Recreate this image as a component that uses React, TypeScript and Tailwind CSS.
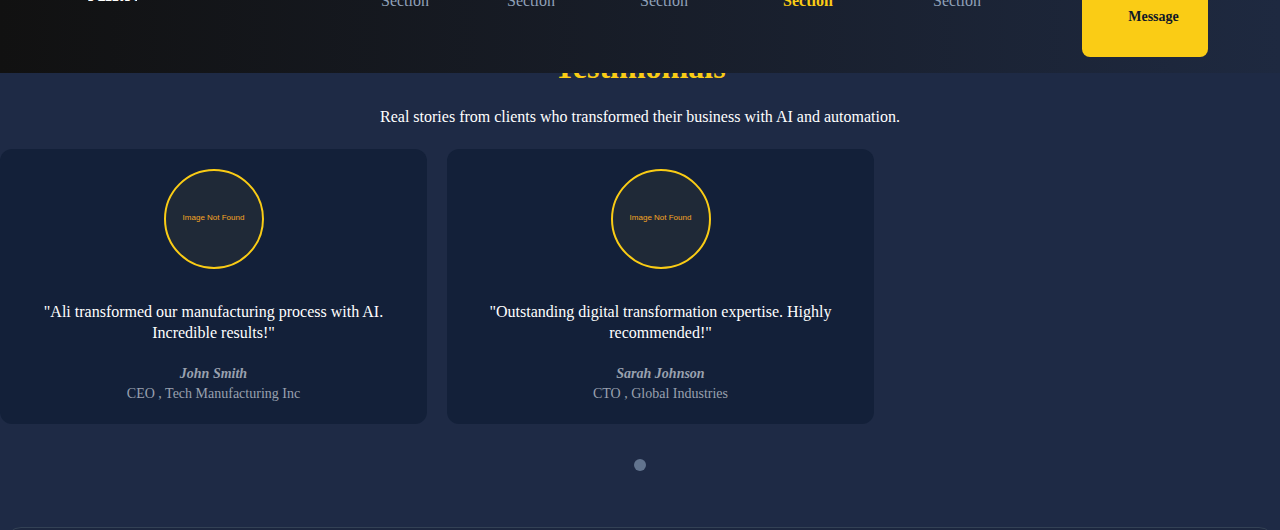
import React from 'react';

const navItems = [
    { top: 'Home', label: 'Section', ml: 'ml-[244px]', active: false },
    { top: 'About', label: 'Section', ml: 'ml-[78px]', active: false },
    { top: 'Services', label: 'Section', ml: 'ml-[85px]', active: false },
    { top: 'Testimonials', label: 'Section', ml: 'ml-[96px]', active: true },
    { top: 'Contact', label: 'Section', ml: 'ml-[101px]', active: false },
];

const testimonials = [
    {
        quote: '"Ali transformed our manufacturing process with AI. Incredible results!"',
        name: 'John Smith',
        role: 'CEO , Tech Manufacturing Inc',
    },
    {
        quote: '"Outstanding digital transformation expertise. Highly recommended!"',
        name: 'Sarah Johnson',
        role: 'CTO , Global Industries',
    },
];

function Header() {
    return (
        <header className="fixed top-0 left-0 right-0 z-20 h-[73px] overflow-hidden bg-[linear-gradient(to_right,#111111,#1e2940)]">
            <div className="flex items-start pl-[88px]">
                <div className="-mt-[23px] text-2xl leading-8 font-bold text-white w-[49px] whitespace-nowrap overflow-hidden">
                    Ali.AI
                </div>
                {navItems.map((item) => (
                    <div
                        key={item.top}
                        className={`${item.ml} -mt-[35px] w-[48px] flex flex-col items-center text-base leading-6 whitespace-nowrap ${
                            item.active ? 'text-[#facc15] font-bold' : 'text-slate-400'
                        }`}
                    >
                        <span>{item.top}</span>
                        <span>{item.label}</span>
                    </div>
                ))}
                <button className="ml-[101px] -mt-[35px] w-[126px] pl-[40px] pr-[23px] pt-4 pb-[28px] rounded-lg bg-[#facc15] text-sm leading-6 font-bold text-gray-900 text-center">
                    Send Message
                </button>
            </div>
        </header>
    );
}

function Card({ quote, name, role }: { quote: string; name: string; role: string }) {
    return (
        <div className="w-[427px] shrink-0 rounded-xl bg-[#132039] px-8 pt-5 pb-5 flex flex-col items-center text-center">
            <div className="w-[100px] h-[100px] rounded-full border-2 border-[#facc15] bg-[#1f2937] flex items-center justify-center pb-[3px]">
                <span className="font-['Liberation_Sans',sans-serif] text-[8px] text-[#f5a524]">Image Not Found</span>
            </div>
            <p className="mt-[32px] text-base leading-[21px] text-white">{quote}</p>
            <p className="mt-[21px] text-sm leading-5 font-bold italic text-gray-400">{name}</p>
            <p className="text-sm leading-5 text-gray-400">{role}</p>
        </div>
    );
}

export default function App() {
    return (
        <div className="min-h-screen bg-[#1e2a45] font-['Liberation_Serif',serif] overflow-hidden">
            <Header />
            <section className="pt-[49px] flex flex-col items-center">
                <h2 className="text-[32px] leading-9 font-bold text-[#facc15]">Testimonials</h2>
                <p className="mt-5 text-base leading-6 text-white">
                    Real stories from clients who transformed their business with AI and automation.
                </p>
                <div className="mt-5 w-full flex gap-5">
                    {testimonials.map((t) => (
                        <Card key={t.name} {...t} />
                    ))}
                </div>
                <div className="mt-[35px] w-3 h-3 rounded-full bg-slate-500" />
            </section>
            <div className="mt-[56px] mx-[5px] h-[200px] rounded-2xl border border-[#334155] bg-[#1c273f]" />
        </div>
    );
}
